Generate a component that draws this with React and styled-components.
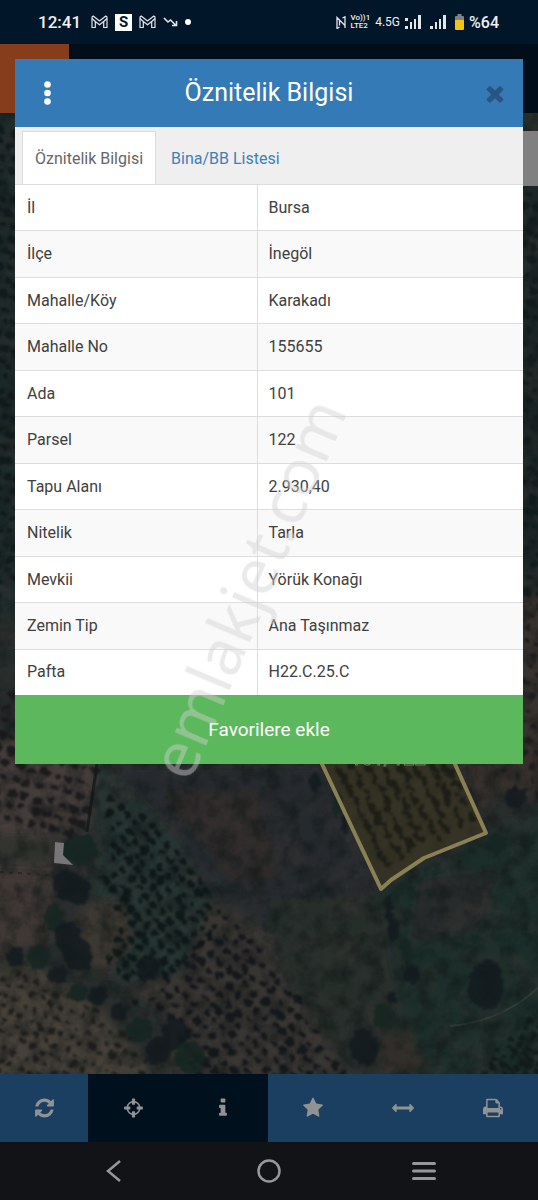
import React, { useState } from 'react';
import styled, { createGlobalStyle } from 'styled-components';

const GlobalStyle = createGlobalStyle`
  *, *::before, *::after { box-sizing: border-box; }
  body { margin: 0; background: #121317; font-family: Roboto, "Noto Sans", sans-serif; }
  button { font: inherit; border: 0; margin: 0; padding: 0; background: none; cursor: pointer; }
`;

const Screen = styled.div`
  position: relative;
  display: flex;
  flex-direction: column;
  min-height: 100vh;
  overflow: hidden;
`;

/* ---------- phone status bar ---------- */

const StatusBar = styled.header`
  display: flex;
  align-items: center;
  justify-content: space-between;
  height: 44px;
  padding: 0 39px 0 38px;
  background: #021629;
  color: #eef0f2;
  font-size: 17px;
  font-weight: 500;
`;

const StatusGroup = styled.div`
  display: flex;
  align-items: center;
  gap: ${(p) => p.$gap}px;
`;

const Percent = styled.span`
  font-size: 16px;
`;

const Network = styled.span`
  font-size: 12px;
  font-weight: 400;
`;

const Carrier = styled.span`
  display: grid;
  font-size: 8px;
  line-height: 8px;
  font-weight: 500;
`;

const AppBadge = styled.span`
  width: 17px;
  height: 17px;
  background: #fff;
  color: #021629;
  font-size: 15px;
  line-height: 17px;
  font-weight: 700;
  text-align: center;
`;

const Glyph = styled.svg`
  display: block;
  flex: none;
`;

/* ---------- app behind the dialog ---------- */

const AppHeader = styled.div`
  height: 69px;
  background: #010d18;
`;

const LogoBlock = styled.div`
  width: 69px;
  height: 100%;
  background: #853d1b;
`;

const MapPane = styled.main`
  position: relative;
  flex: 1;
  display: flex;
  justify-content: flex-end;
  align-items: flex-start;
  min-height: 720px;
  padding-top: 18px;
  background: #262c2b;
`;

const MapImage = styled.svg`
  position: absolute;
  inset: 0;
  width: 100%;
  height: 100%;
`;

const MapPanel = styled.div`
  position: relative;
  width: 48px;
  height: 55px;
  background: #808080;
`;

const Toolbar = styled.nav`
  display: grid;
  grid-template-columns: 88px repeat(5, 1fr);
  height: 68px;
`;

const Tool = styled.button`
  display: grid;
  place-items: center;
  background: ${(p) => (p.$dark ? '#00101d' : '#1b3f60')};
  color: #909294;
`;

const SystemNav = styled.nav`
  display: grid;
  grid-template-columns: repeat(3, 155px);
  justify-content: center;
  height: 58px;
  background: #121317;
  color: #96979a;
`;

const SystemButton = styled.button`
  display: grid;
  place-items: center;
  color: inherit;
`;

/* ---------- dialog ---------- */

const Dialog = styled.section`
  position: absolute;
  top: 59px;
  left: 15px;
  right: 15px;
  background: #fff;
`;

const DialogHeader = styled.div`
  display: grid;
  grid-template-columns: 64px 1fr 64px;
  align-items: center;
  height: 68px;
  background: #337ab7;
  color: #fff;
`;

const Title = styled.h2`
  margin: 0;
  font-size: 25px;
  line-height: 32px;
  font-weight: 400;
  text-align: center;
`;

const HeaderButton = styled.button`
  display: flex;
  align-items: center;
  justify-content: ${(p) => (p.$end ? 'flex-end' : 'center')};
  height: 68px;
  padding-right: ${(p) => (p.$end ? 18 : 0)}px;
  color: ${(p) => (p.$end ? '#295580' : '#fff')};
`;

const TabList = styled.div`
  display: flex;
  align-items: flex-end;
  height: 57px;
  padding: 0 7px;
  background: #efefef;
  border-top: 1px solid #e3eef8;
`;

const Tab = styled.button`
  height: 53px;
  padding: 0 ${(p) => (p.$active ? 12 : 14)}px;
  border: solid ${(p) => (p.$active ? '#dddddd' : 'transparent')};
  border-width: 1px 1px 0;
  background: ${(p) => (p.$active ? '#fff' : 'transparent')};
  color: ${(p) => (p.$active ? '#666666' : '#4080b5')};
  font-size: 16px;
  white-space: nowrap;
`;

const Table = styled.table`
  width: 100%;
  height: 511px;
  table-layout: fixed;
  border-collapse: collapse;
  color: #404040;
  font-size: 16px;
  line-height: 24px;
`;

const Row = styled.tr`
  background: #fff;
  &:nth-child(even) { background: #f9f9f9; }
`;

const Label = styled.th`
  width: 242px;
  padding: 0 12px;
  border-top: 1px solid #dddddd;
  border-right: 1px solid #dddddd;
  font-weight: 400;
  text-align: left;
`;

const Value = styled.td`
  padding: 0 11px;
  border-top: 1px solid #dddddd;
`;

const FavoriteButton = styled.button`
  display: block;
  width: 100%;
  height: 69px;
  background: #5cb85c;
  color: #fff;
  font-size: 19px;
`;

const Watermark = styled.div`
  position: absolute;
  left: 46%;
  top: 49%;
  transform: translate(-50%, -50%) rotate(-67deg);
  color: rgba(208, 208, 208, 0.45);
  font-family: "Noto Sans", "Open Sans", sans-serif;
  font-size: 64px;
  line-height: 64px;
  white-space: nowrap;
  pointer-events: none;
`;

/* ---------- icons ---------- */

const ICONS = {
  refresh: [1536, 'M1511 1056q0 5-1 7-64 268-268 434.5t-478 166.5q-146 0-282.5-55t-243.5-157l-129 129q-19 19-45 19t-45-19-19-45v-448q0-26 19-45t45-19h448q26 0 45 19t19 45-19 45l-137 137q71 66 161 102t187 36q134 0 250-65t186-179q11-17 53-117 8-23 30-23h192q13 0 22.5 9.5t9.5 22.5zm25-800v448q0 26-19 45t-45 19h-448q-26 0-45-19t-19-45 19-45l138-138q-148-137-349-137-134 0-250 65t-186 179q-11 17-53 117-8 23-30 23h-199q-13 0-22.5-9.5t-9.5-22.5v-7q65-268 270-434.5t480-166.5q146 0 284 55.5t245 156.5l130-129q19-19 45-19t45 19 19 45z'],
  crosshairs: [1536, 'M1197 1024h-109q-26 0-45-19t-19-45v-128q0-26 19-45t45-19h109q-32-108-112.5-188.5t-188.5-112.5v109q0 26-19 45t-45 19h-128q-26 0-45-19t-19-45v-109q-108 32-188.5 112.5t-112.5 188.5h109q26 0 45 19t19 45v128q0 26-19 45t-45 19h-109q32 108 112.5 188.5t188.5 112.5v-109q0-26 19-45t45-19h128q26 0 45 19t19 45v109q108-32 188.5-112.5t112.5-188.5zm339-192v128q0 26-19 45t-45 19h-143q-37 161-154.5 278.5t-278.5 154.5v143q0 26-19 45t-45 19h-128q-26 0-45-19t-19-45v-143q-161-37-278.5-154.5t-154.5-278.5h-143q-26 0-45-19t-19-45v-128q0-26 19-45t45-19h143q37-161 154.5-278.5t278.5-154.5v-143q0-26 19-45t45-19h128q26 0 45 19t19 45v143q161 37 278.5 154.5t154.5 278.5h143q26 0 45 19t19 45z'],
  info: [640, 'M640 1344v128q0 26-19 45t-45 19h-512q-26 0-45-19t-19-45v-128q0-26 19-45t45-19h64v-384h-64q-26 0-45-19t-19-45v-128q0-26 19-45t45-19h384q26 0 45 19t19 45v576h64q26 0 45 19t19 45zm-128-1152v192q0 26-19 45t-45 19h-256q-26 0-45-19t-19-45v-192q0-26 19-45t45-19h256q26 0 45 19t19 45z'],
  star: [1664, 'M1664 647q0 22-26 48l-363 354 86 500q1 7 1 20 0 21-10.5 35.5t-30.5 14.5q-19 0-40-12l-449-236-449 236q-22 12-40 12-21 0-31.5-14.5t-10.5-35.5q0-6 2-20l86-500-364-354q-25-27-25-48 0-37 56-46l502-73 225-455q19-41 49-41t49 41l225 455 502 73q56 9 56 46z'],
  measure: [1792, 'M1792 896q0 26-19 45l-256 256q-19 19-45 19t-45-19-19-45v-128h-1024v128q0 26-19 45t-45 19-45-19l-256-256q-19-19-19-45t19-45l256-256q19-19 45-19t45 19 19 45v128h1024v-128q0-26 19-45t45-19 45 19l256 256q19 19 19 45z'],
  print: [1664, 'M384 1536h896v-256h-896v256zm0-640h896v-384h-160q-40 0-68-28t-28-68v-160h-640v640zm1152 64q0-26-19-45t-45-19-45 19-19 45 19 45 45 19 45-19 19-45zm128 0v416q0 13-9.5 22.5t-22.5 9.5h-224v160q0 40-28 68t-68 28h-960q-40 0-68-28t-28-68v-160h-224q-13 0-22.5-9.5t-9.5-22.5v-416q0-79 56.5-135.5t135.5-56.5h64v-544q0-40 28-68t68-28h672q40 0 88 20t76 48l152 152q28 28 48 76t20 88v256h64q79 0 135.5 56.5t56.5 135.5z'],
  close: [1408, 'M1298 1322q0 40-28 68l-136 136q-28 28-68 28t-68-28l-294-294-294 294q-28 28-68 28t-68-28l-136-136q-28-28-28-68t28-68l294-294-294-294q-28-28-28-68t28-68l136-136q28-28 68-28t68 28l294 294 294-294q28-28 68-28t68 28l136 136q28 28 28 68t-28 68l-294 294 294 294q28 28 28 68z'],
};

function Icon({ name, size = 22 }) {
  const [width, path] = ICONS[name];
  return (
    <Glyph viewBox={`0 0 ${width} 1792`} width={Math.round((width / 1792) * size)} height={size} fill="currentColor" aria-hidden="true">
      <path d={path} />
    </Glyph>
  );
}

function MailIcon() {
  return (
    <Glyph width="17" height="14" viewBox="0 0 17 14" fill="none" stroke="#e3e6e9" strokeWidth="1.2" strokeLinejoin="round" aria-hidden="true">
      <path d="M1 12.500V2.500Q1 1 2.500 1.200L8.500 6 14.500 1.200Q16 1 16 2.500V12.500H12.700V6.500L8.500 9.800 4.300 6.500V12.500Z" />
      <path d="M1 3.500 4.300 6.500M16 3.500 12.700 6.500" />
    </Glyph>
  );
}

function SignalIcon({ split }) {
  return (
    <Glyph width="16" height="14" viewBox="0 0 16 14" fill="#e3e6e9" aria-hidden="true">
      <rect x="0" y="11" width="3" height="3" />
      {split && <rect x="0" y="3" width="3" height="3" />}
      <rect x="5" y="7" width="2" height="7" />
      <rect x="9" y="4" width="2" height="10" />
      <rect x="13" y="0" width="3" height="14" />
    </Glyph>
  );
}

/* ---------- satellite map ---------- */

function createRandom(seed) {
  let s = seed;
  return () => {
    s = (s * 16807) % 2147483647;
    return s / 2147483647;
  };
}

function inside(x, y, poly) {
  let hit = false;
  for (let i = 0, j = poly.length - 1; i < poly.length; j = i++) {
    const [xi, yi] = poly[i];
    const [xj, yj] = poly[j];
    if (yi > y !== yj > y && x < ((xj - xi) * (y - yi)) / (yj - yi) + xi) hit = !hit;
  }
  return hit;
}

const ORCHARDS = [
  { poly: [[-5, 690], [102, 690], [98, 764], [86, 832], [45, 835], [-5, 818]], step: [13, 13], angle: 15, r: 4.4, fill: '#19181a', seed: 11 },
  { poly: [[104, 790], [128, 800], [175, 842], [205, 880], [216, 925], [208, 945], [185, 965], [140, 985], [104, 965], [122, 920], [102, 890], [112, 850]], step: [12, 10], angle: 48, r: 4, fill: '#0e1718', seed: 23 },
  { poly: [[-5, 970], [45, 975], [95, 1010], [140, 1045], [160, 1080], [-5, 1080]], step: [11, 12], angle: 25, r: 3, fill: '#1c1b1a', seed: 37 },
  { poly: [[222, 905], [262, 945], [300, 1000], [345, 1075], [190, 1080], [175, 1020], [130, 1000], [180, 970]], step: [12, 12], angle: 42, r: 4.2, fill: '#12161a', seed: 41 },
  { poly: [[330, 764], [452, 764], [476, 826], [424, 845], [386, 870]], step: [6, 14], angle: 63, r: 3.4, fill: '#1b1c17', seed: 53 },
  { poly: [[524, 600], [545, 600], [545, 800], [510, 800], [500, 764], [524, 764]], step: [13, 13], angle: 20, r: 3, fill: '#1a1c1d', seed: 61 },
  { poly: [[-5, 113], [16, 113], [16, 580], [-5, 600]], step: [11, 13], angle: 20, r: 4, fill: '#10191b', seed: 67 },
  { poly: [[524, 190], [545, 190], [545, 600], [524, 600]], step: [12, 13], angle: 20, r: 4, fill: '#101b1c', seed: 71 },
  { poly: [[475, 1074], [545, 1000], [545, 1080]], step: [9, 8], angle: 25, r: 3.4, fill: '#101a19', seed: 79 },
];

function treesOf({ poly, step, angle, r, seed }) {
  const random = createRandom(seed);
  const xs = poly.map((p) => p[0]);
  const ys = poly.map((p) => p[1]);
  const cx = (Math.min(...xs) + Math.max(...xs)) / 2;
  const cy = (Math.min(...ys) + Math.max(...ys)) / 2;
  const reach = Math.max(Math.max(...xs) - Math.min(...xs), Math.max(...ys) - Math.min(...ys));
  const a = (angle * Math.PI) / 180;
  const trees = [];
  for (let u = -reach; u < reach; u += step[0]) {
    for (let v = -reach; v < reach; v += step[1]) {
      const du = u + (random() - 0.5) * step[0] * 0.4;
      const dv = v + (random() - 0.5) * step[1] * 0.4;
      const x = cx + du * Math.cos(a) - dv * Math.sin(a);
      const y = cy + du * Math.sin(a) + dv * Math.cos(a);
      const rx = r * (0.7 + random() * 0.6);
      if (inside(x, y, poly)) trees.push({ x, y, rx, ry: rx * (0.65 + random() * 0.3) });
    }
  }
  return trees;
}

const PATCHES = [
  ['M-20 100H16V620L-20 600Z', '#1e292a'],
  ['M522 180H560V590H522Z', '#1a2728'],
  ['M516 595H560V800L500 790 460 764Z', '#37322f'],
  ['M-20 740H100L88 835H-20Z', '#453e3a'],
  ['M-20 832H60L50 940-20 965Z', '#3f3835'],
  ['M-20 834 60 840 55 865-20 862Z', '#2e332f'],
  ['M-20 965 40 968 100 1010 160 1080H-20Z', '#443f38'],
  ['M98 764 320 764 380 890 300 950 225 905 170 835 110 800Z', '#272b2d'],
  ['M160 790 255 790 280 880 230 880Z', '#2f2a2b'],
  ['M100 760 170 830 215 900 210 950 140 990 95 960Z', '#283533'],
  ['M82 905 120 900 135 940 105 975 78 955Z', '#3d3933'],
  ['M210 900 265 930 350 1080 170 1080 170 1010 120 990 185 970Z', '#373433'],
  ['M270 900 380 895 400 1000 340 1060 270 950Z', '#252d2c'],
  ['M380 890 490 835 550 800 560 1080 370 1080 400 980Z', '#1d2d29'],
  ['M420 880 500 870 480 930 410 940Z', '#26292a'],
  ['M380 1035 410 1030 430 1074 375 1080Z', '#322e2c'],
  ['M455 750H545V800L500 790 480 815Z', '#342e2c'],
];

const CLUMPS = [
  [80, 850, 18, 16], [66, 885, 13, 16], [78, 890, 12, 14], [54, 918, 9, 14], [68, 938, 14, 16],
  [16, 957, 9, 10], [38, 957, 11, 12], [58, 975, 10, 9], [78, 955, 14, 16], [78, 993, 10, 9],
  [98, 996, 9, 10], [118, 1012, 8, 9], [139, 1030, 13, 12], [158, 1050, 12, 14], [175, 1034, 13, 16],
  [190, 1058, 15, 16], [148, 968, 12, 14], [486, 985, 18, 24], [498, 843, 10, 10], [516, 798, 11, 10],
  [315, 783, 5, 10], [337, 805, 4, 15], [345, 822, 4, 12], [364, 1048, 14, 18], [382, 1015, 9, 12],
  [389, 910, 4, 14], [394, 930, 5, 12], [406, 950, 5, 12], [412, 975, 8, 10], [392, 998, 4, 6],
];

function SatelliteMap() {
  return (
    <MapImage viewBox="0 113 538 961" preserveAspectRatio="xMidYMin slice" aria-hidden="true">
      <defs>
        <filter id="soften" x="-10%" y="-10%" width="120%" height="120%"><feGaussianBlur stdDeviation="5" /></filter>
        <filter id="canopy" x="-5%" y="-5%" width="110%" height="110%" colorInterpolationFilters="sRGB">
          <feTurbulence type="fractalNoise" baseFrequency="0.15" numOctaves="2" seed="4" result="n" />
          <feDisplacementMap in="SourceGraphic" in2="n" scale="8" xChannelSelector="R" yChannelSelector="G" />
          <feGaussianBlur stdDeviation="0.8" />
        </filter>
        <filter id="shade" x="0" y="0" width="100%" height="100%" colorInterpolationFilters="sRGB">
          <feTurbulence type="fractalNoise" baseFrequency="0.06" numOctaves="4" seed="9" />
          <feColorMatrix values="0 0 0 0 0.05  0 0 0 0 0.08  0 0 0 0 0.08  1.2 0 0 0 -0.45" />
        </filter>
        <filter id="tint" x="0" y="0" width="100%" height="100%" colorInterpolationFilters="sRGB">
          <feTurbulence type="fractalNoise" baseFrequency="0.03" numOctaves="4" seed="21" />
          <feColorMatrix values="0 0 0 0 0.24  0 0 0 0 0.21  0 0 0 0 0.2  0 1 0 0 -0.42" />
        </filter>
      </defs>
      <rect y="113" width="538" height="961" fill="#262c2b" />
      <g filter="url(#soften)">
        {PATCHES.map(([d, fill]) => <path key={d} d={d} fill={fill} />)}
      </g>
      <path d="M0 866 52 870M0 880 54 883M0 893 50 895M0 905 48 906" stroke="#463c39" strokeWidth="3" opacity="0.5" />
      <path d="M0 872 50 875" stroke="#262525" strokeWidth="2" strokeDasharray="4 5" opacity="0.8" />
      <path d="M97 764 87 832" stroke="#171e1e" strokeWidth="3" />
      <path d="M450 1026Q500 1022 538 988" stroke="#3a4342" strokeWidth="2" fill="none" opacity="0.7" />
      <rect y="113" width="538" height="961" filter="url(#tint)" />
      <rect y="113" width="538" height="961" filter="url(#shade)" />
      <path d="M322 764 381 889 391 880 424 858 486 833 455 764Z" fill="#3d3722" fillOpacity="0.65" />
      <g filter="url(#canopy)">
        {ORCHARDS.map((orchard) => (
          <g key={orchard.seed} fill={orchard.fill} opacity="0.9">
            {treesOf(orchard).map((t, i) => (
              <ellipse key={i} cx={t.x} cy={t.y} rx={t.rx} ry={t.ry} transform={`rotate(${orchard.angle} ${t.x} ${t.y})`} />
            ))}
          </g>
        ))}
        <g opacity="0.85">
          {CLUMPS.map(([x, y, rx, ry], i) => (
            <ellipse key={i} cx={x} cy={y} rx={rx} ry={ry} fill={i % 3 === 0 ? '#162622' : '#131b1f'} />
          ))}
        </g>
      </g>
      <path d="M55 842 64 843 63 855 73 865 54 863Z" fill="#777578" />
      <path d="M300 717 322 764 381 889 391 880 424 858 486 833 455 764 434 717" fill="none" stroke="#8b7f54" strokeWidth="4" strokeLinejoin="round" />
      <text x="388" y="765" textAnchor="middle" fontFamily="Roboto, sans-serif" fontSize="20" fill="#2c2c26" stroke="#77776c" strokeWidth="1">101/122</text>
    </MapImage>
  );
}

/* ---------- content ---------- */

const ATTRIBUTES = [
  ['İl', 'Bursa'],
  ['İlçe', 'İnegöl'],
  ['Mahalle/Köy', 'Karakadı'],
  ['Mahalle No', '155655'],
  ['Ada', '101'],
  ['Parsel', '122'],
  ['Tapu Alanı', '2.930,40'],
  ['Nitelik', 'Tarla'],
  ['Mevkii', 'Yörük Konağı'],
  ['Zemin Tip', 'Ana Taşınmaz'],
  ['Pafta', 'H22.C.25.C'],
];

const TOOLS = [
  { icon: 'refresh', label: 'Yenile' },
  { icon: 'crosshairs', label: 'Konum', dark: true },
  { icon: 'info', label: 'Bilgi', dark: true },
  { icon: 'star', label: 'Favoriler' },
  { icon: 'measure', label: 'Ölçüm' },
  { icon: 'print', label: 'Yazdır' },
];

const TABS = ['Öznitelik Bilgisi', 'Bina/BB Listesi'];

export default function App() {
  const [tab, setTab] = useState(0);
  return (
    <>
      <GlobalStyle />
      <Screen>
        <StatusBar>
          <StatusGroup $gap={10}>
            <span>12:41</span>
            <StatusGroup $gap={7}>
              <MailIcon />
              <AppBadge>S</AppBadge>
              <MailIcon />
              <Glyph width="15" height="10" viewBox="0 0 15 10" fill="none" stroke="#e3e6e9" strokeWidth="1.600" aria-hidden="true">
                <path d="M1 1 5 5 7.500 3 12.500 8M9 8.500H13.500V4" />
              </Glyph>
              <Glyph width="6" height="6" viewBox="0 0 6 6" aria-hidden="true"><circle cx="3" cy="3" r="3" fill="#fff" /></Glyph>
            </StatusGroup>
          </StatusGroup>
          <StatusGroup $gap={9}>
            <StatusGroup $gap={5}>
              <Glyph width="10" height="13" viewBox="0 0 10 13" fill="none" stroke="#e3e6e9" strokeWidth="1.300" aria-hidden="true">
                <path d="M3.500 11 1 12.500V1.500L9 9.500M3.500 4V9.500M6.500 2 9 .8V12" />
              </Glyph>
              <Carrier><span>Vo))1</span><span>LTE2</span></Carrier>
              <Network>4.5G</Network>
              <SignalIcon split />
            </StatusGroup>
            <SignalIcon />
            <StatusGroup $gap={5}>
              <Glyph width="9" height="16" viewBox="0 0 9 16" aria-hidden="true">
                <path d="M2.500 0H6.500V2H8Q9 2 9 3V6H0V3Q0 2 1 2H2.500Z" fill="#7d8487" />
                <path d="M0 6H9V15Q9 16 8 16H1Q0 16 0 15Z" fill="#f2c312" />
              </Glyph>
              <Percent>%64</Percent>
            </StatusGroup>
          </StatusGroup>
        </StatusBar>

        <AppHeader><LogoBlock /></AppHeader>

        <MapPane>
          <SatelliteMap />
          <MapPanel />
        </MapPane>

        <Toolbar aria-label="Harita araçları">
          {TOOLS.map((t) => (
            <Tool key={t.icon} type="button" aria-label={t.label} $dark={t.dark}>
              <Icon name={t.icon} />
            </Tool>
          ))}
        </Toolbar>

        <SystemNav aria-label="Sistem">
          <SystemButton type="button" aria-label="Geri">
            <Glyph width="16" height="22" viewBox="0 0 16 22" fill="none" stroke="currentColor" strokeWidth="2.500"><path d="M14 1 2 11 14 21" /></Glyph>
          </SystemButton>
          <SystemButton type="button" aria-label="Ana ekran">
            <Glyph width="24" height="24" viewBox="0 0 24 24" fill="none" stroke="currentColor" strokeWidth="2.500"><circle cx="12" cy="12" r="10.500" /></Glyph>
          </SystemButton>
          <SystemButton type="button" aria-label="Son uygulamalar">
            <Glyph width="24" height="20" viewBox="0 0 24 20" fill="none" stroke="currentColor" strokeWidth="3" strokeLinecap="round"><path d="M1.500 2.500H22.500M1.500 10H22.500M1.500 17.500H22.500" /></Glyph>
          </SystemButton>
        </SystemNav>

        <Dialog role="dialog" aria-labelledby="dialog-title">
          <DialogHeader>
            <HeaderButton type="button" aria-label="Menü">
              <Glyph width="7" height="24" viewBox="0 0 7 24" fill="currentColor">
                <circle cx="3.500" cy="3.500" r="3.300" /><circle cx="3.500" cy="12" r="3.300" /><circle cx="3.500" cy="20.500" r="3.300" />
              </Glyph>
            </HeaderButton>
            <Title id="dialog-title">Öznitelik Bilgisi</Title>
            <HeaderButton type="button" aria-label="Kapat" $end>
              <Icon name="close" size={25} />
            </HeaderButton>
          </DialogHeader>
          <TabList role="tablist">
            {TABS.map((name, i) => (
              <Tab key={name} type="button" role="tab" aria-selected={tab === i} $active={tab === i} onClick={() => setTab(i)}>
                {name}
              </Tab>
            ))}
          </TabList>
          <Table>
            <tbody>
              {ATTRIBUTES.map(([label, value]) => (
                <Row key={label}>
                  <Label scope="row">{label}</Label>
                  <Value>{value}</Value>
                </Row>
              ))}
            </tbody>
          </Table>
          <FavoriteButton type="button">Favorilere ekle</FavoriteButton>
        </Dialog>

        <Watermark>emlakjet.com</Watermark>
      </Screen>
    </>
  );
}
